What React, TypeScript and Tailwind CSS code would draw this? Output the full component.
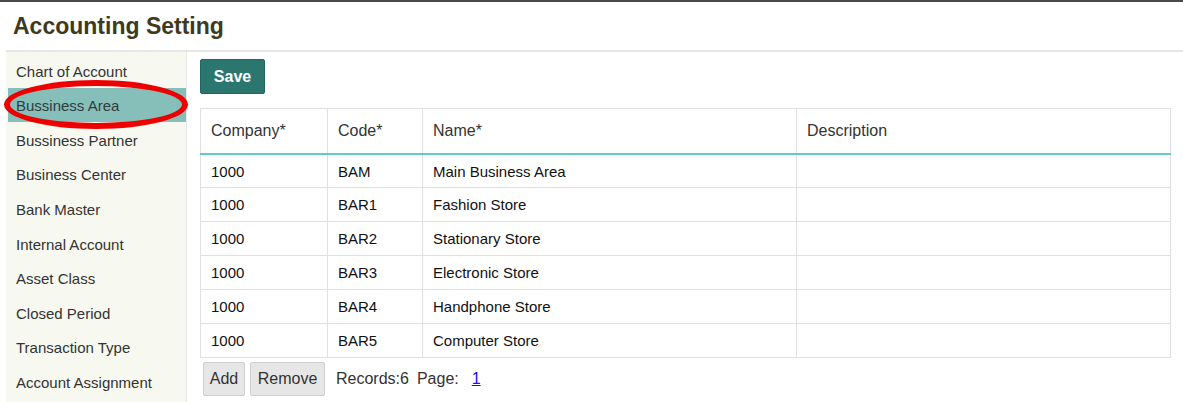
const menu = [
  "Chart of Account",
  "Bussiness Area",
  "Bussiness Partner",
  "Business Center",
  "Bank Master",
  "Internal Account",
  "Asset Class",
  "Closed Period",
  "Transaction Type",
  "Account Assignment",
];

const rows = [
  { company: "1000", code: "BAM", name: "Main Business Area" },
  { company: "1000", code: "BAR1", name: "Fashion Store" },
  { company: "1000", code: "BAR2", name: "Stationary Store" },
  { company: "1000", code: "BAR3", name: "Electronic Store" },
  { company: "1000", code: "BAR4", name: "Handphone Store" },
  { company: "1000", code: "BAR5", name: "Computer Store" },
];

export default function App() {
  return (
    <div className="w-[1183px] h-[402px] overflow-hidden bg-white border-t-2 border-[#4a4a4a] font-['Liberation_Sans',Arial,sans-serif] text-[#333]">
      {/* Title */}
      <div className="h-[48px] pl-[13px] pt-[10px]">
        <h1 className="text-[23px] font-bold text-[#3d3a1e] leading-[28px]">Accounting Setting</h1>
      </div>
      <div className="ml-[6px] h-[2px] bg-[#e6e6e6]" />

      <div className="flex ml-[6px]">
        {/* Sidebar */}
        <div className="relative w-[181px] h-[350px] bg-[#f7f9f0] border-r border-[#e8e8e8] pl-[2px] pt-[1px]">
          {menu.map((item) => (
            <div
              key={item}
              className={`h-[34.6px] flex items-center pl-[8px] pt-[3px] text-[15px] ${
                item === "Bussiness Area" ? "bg-[#86bfba] text-[#2f3b3a]" : "text-[#333]"
              }`}
            >
              {item}
            </div>
          ))}
          {/* red annotation */}
          <div className="absolute left-[-2px] top-[28px] w-[184px] h-[49px] rounded-[50%] border-[6px] border-[#ee0000]" />
        </div>

        {/* Main */}
        <div className="flex-1 pl-[13px] pr-[12px] pt-[7px]">
          <button className="h-[35px] w-[65px] rounded-[2px] bg-[#2b7770] border border-[#256660] text-white text-[16px] font-bold">
            Save
          </button>

          <table className="mt-[14px] w-[971px] border-collapse border border-[#e0e0e0] table-fixed">
            <colgroup>
              <col className="w-[127px]" />
              <col className="w-[95px]" />
              <col className="w-[374px]" />
              <col />
            </colgroup>
            <thead>
              <tr className="h-[45px] border-b-2 border-[#62c9c3]">
                {["Company*", "Code*", "Name*", "Description"].map((h) => (
                  <th key={h} className="text-left font-normal text-[16px] pl-[10px] border-r border-[#e0e0e0] text-[#333]">
                    {h}
                  </th>
                ))}
              </tr>
            </thead>
            <tbody>
              {rows.map((r) => (
                <tr key={r.code} className="h-[34px] border-b border-[#e0e0e0] text-[15px] text-[#111]">
                  <td className="pl-[10px] pt-[2px] border-r border-[#e0e0e0]">{r.company}</td>
                  <td className="pl-[10px] pt-[2px] border-r border-[#e0e0e0]">{r.code}</td>
                  <td className="pl-[10px] pt-[2px] border-r border-[#e0e0e0]">{r.name}</td>
                  <td className="pl-[10px]"></td>
                </tr>
              ))}
            </tbody>
          </table>

          <div className="flex items-center mt-[4px] pl-[3px] text-[16px]">
            <button className="h-[34px] w-[42px] bg-[#e6e6e6] border border-[#cfcfcf] rounded-[2px] text-[#333]">Add</button>
            <button className="ml-[5px] h-[34px] w-[75px] bg-[#e6e6e6] border border-[#cfcfcf] rounded-[2px] text-[#333]">Remove</button>
            <span className="ml-[11px] text-[#333]">Records:6</span>
            <span className="ml-[8px] text-[#333]">Page:</span>
            <a className="ml-[13px] text-[#1a0dff] underline">1</a>
          </div>
        </div>
      </div>
    </div>
  );
}
